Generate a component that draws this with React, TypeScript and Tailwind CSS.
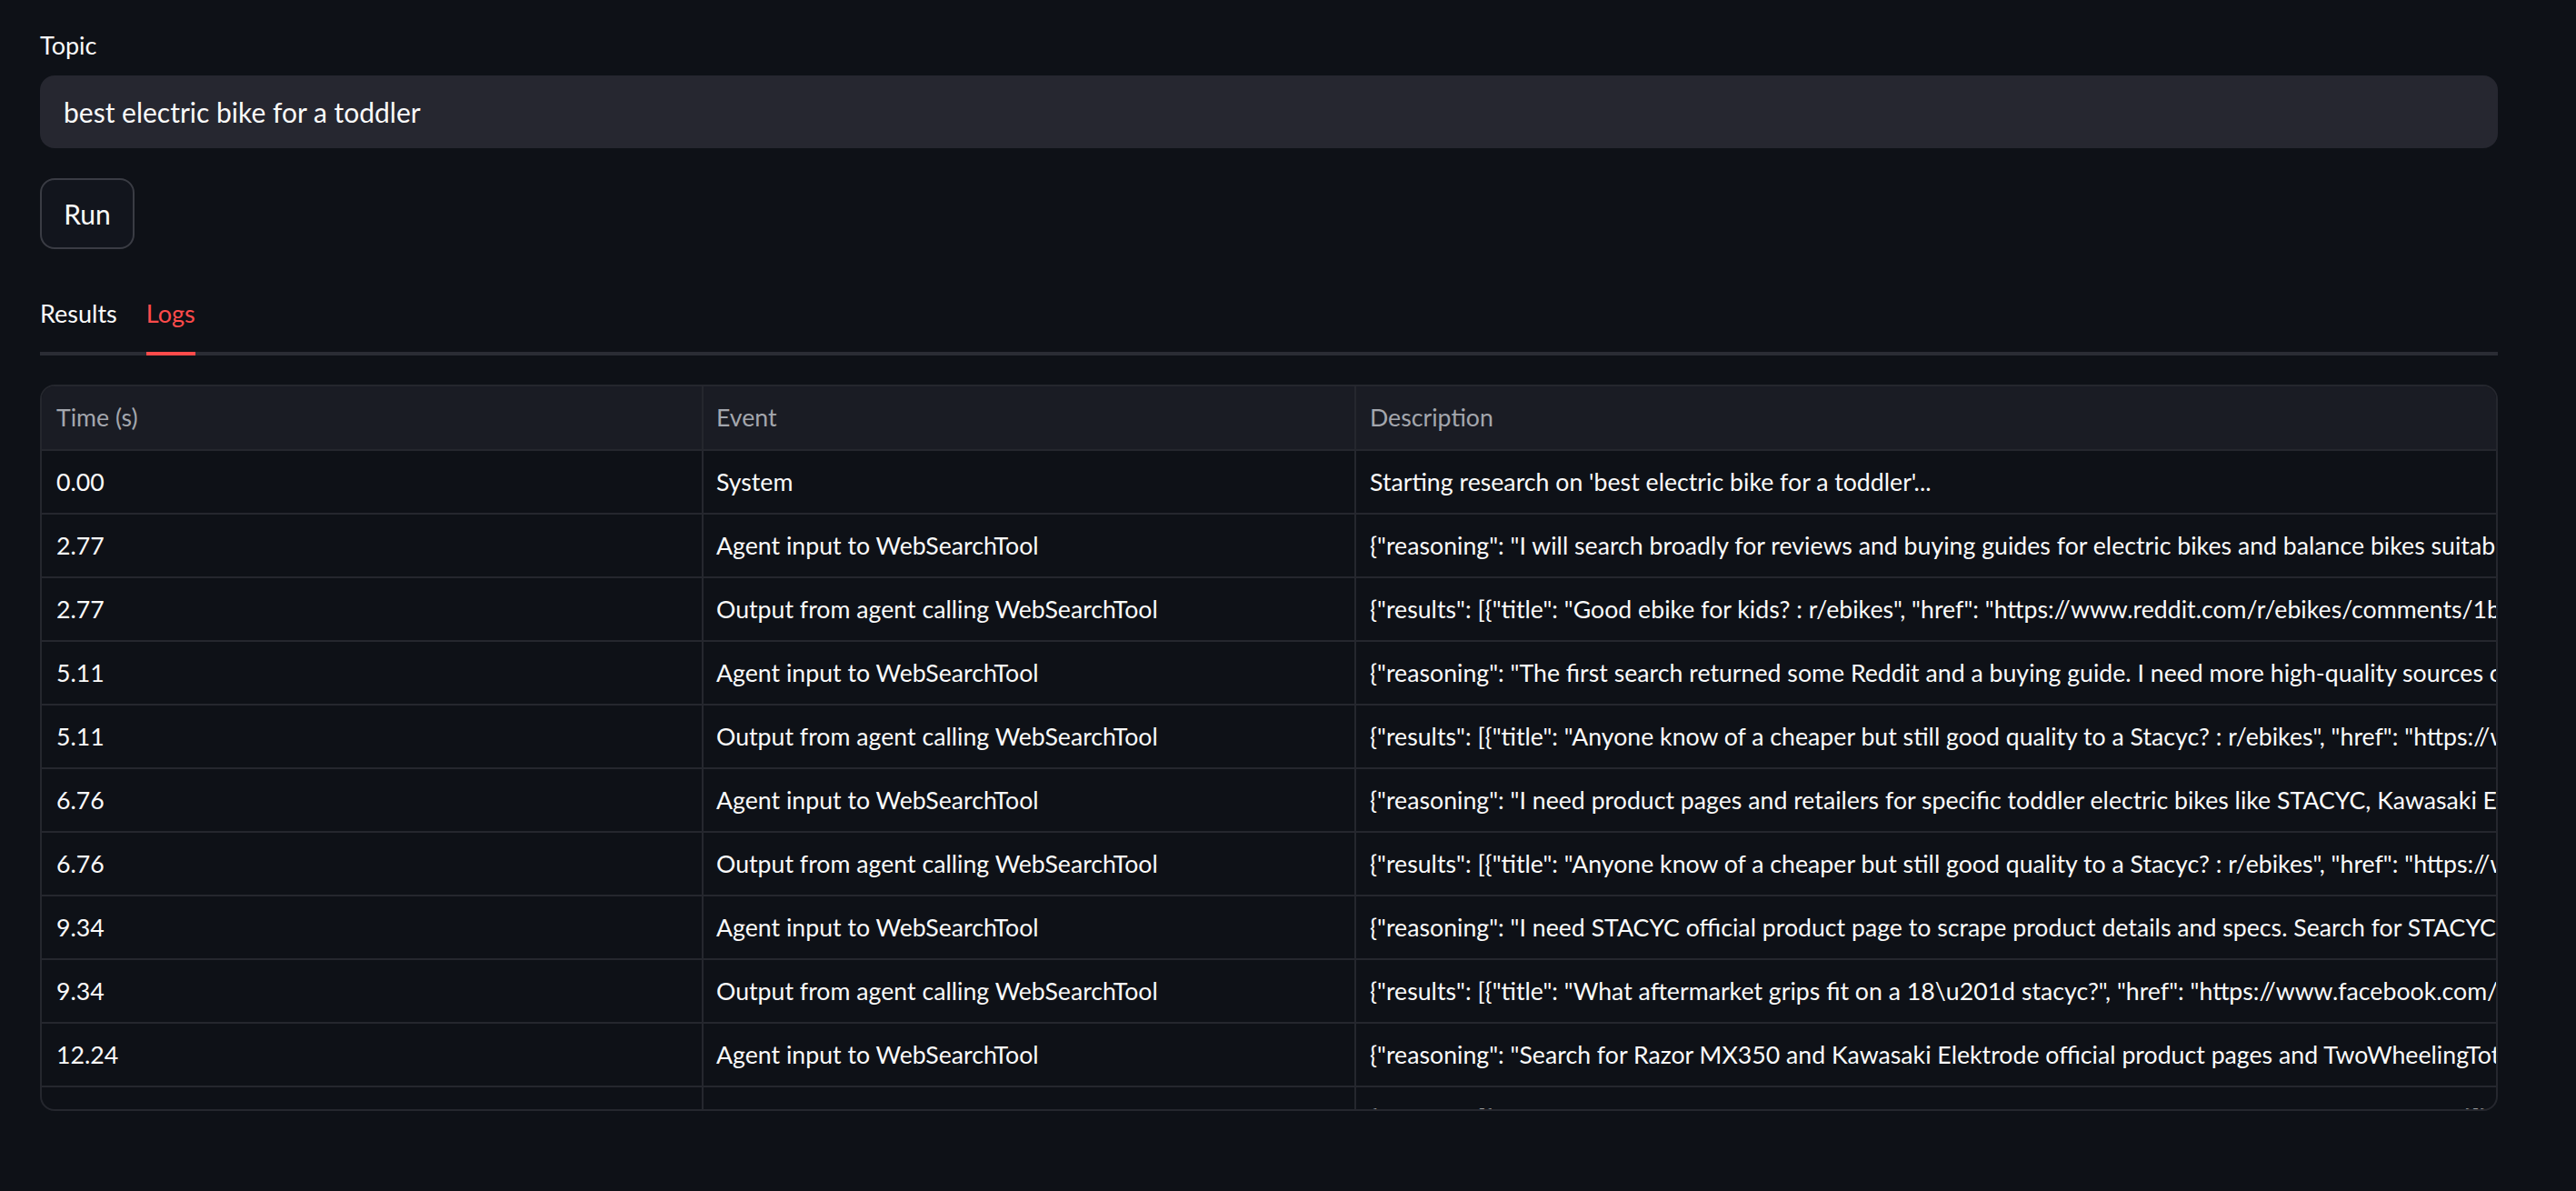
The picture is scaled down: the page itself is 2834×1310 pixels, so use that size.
const logs = [
  { t: '0.00', ev: 'System', desc: "Starting research on 'best electric bike for a toddler'..." },
  {
    t: '2.77',
    ev: 'Agent input to WebSearchTool',
    desc: '{"reasoning": "I will search broadly for reviews and buying guides for electric bikes and balance bikes suitable for toddlers and young children.", "search_term": "best electric balance bike for toddlers"}',
  },
  {
    t: '2.77',
    ev: 'Output from agent calling WebSearchTool',
    desc: '{"results": [{"title": "Good ebike for kids? : r/ebikes", "href": "https://www.reddit.com/r/ebikes/comments/1b2c3d/good_ebike_for_kids/", "body": "..."}]}',
  },
  {
    t: '5.11',
    ev: 'Agent input to WebSearchTool',
    desc: '{"reasoning": "The first search returned some Reddit and a buying guide. I need more high-quality sources on specific models and safety.", "search_term": "toddler electric balance bike review"}',
  },
  {
    t: '5.11',
    ev: 'Output from agent calling WebSearchTool',
    desc: '{"results": [{"title": "Anyone know of a cheaper but still good quality to a Stacyc? : r/ebikes", "href": "https://www.reddit.com/r/ebikes/comments/"}]}',
  },
  {
    t: '6.76',
    ev: 'Agent input to WebSearchTool',
    desc: '{"reasoning": "I need product pages and retailers for specific toddler electric bikes like STACYC, Kawasaki Elektrode and Razor.", "search_term": "STACYC 12eDRIVE"}',
  },
  {
    t: '6.76',
    ev: 'Output from agent calling WebSearchTool',
    desc: '{"results": [{"title": "Anyone know of a cheaper but still good quality to a Stacyc? : r/ebikes", "href": "https://www.reddit.com/r/ebikes/comments/"}]}',
  },
  {
    t: '9.34',
    ev: 'Agent input to WebSearchTool',
    desc: '{"reasoning": "I need STACYC official product page to scrape product details and specs. Search for STACYC official site.", "search_term": "stacyc.com 12eDRIVE"}',
  },
  {
    t: '9.34',
    ev: 'Output from agent calling WebSearchTool',
    desc: '{"results": [{"title": "What aftermarket grips fit on a 18\\u201d stacyc?", "href": "https://www.facebook.com/groups/stacyc/posts/"}]}',
  },
  {
    t: '12.24',
    ev: 'Agent input to WebSearchTool',
    desc: '{"reasoning": "Search for Razor MX350 and Kawasaki Elektrode official product pages and TwoWheelingTots reviews.", "search_term": "Razor MX350"}',
  },
  {
    t: '12.24',
    ev: 'Output from agent calling WebSearchTool',
    desc: '{"results": [{"title": "Razor MX350 Dirt Rocket Electric Motocross Bike", "href": "https://www.razor.com/"}]}',
  },
];

function Row({ t, ev, desc }: { t: string; ev: string; desc: string }) {
  return (
    <div className="flex h-[70px] shrink-0 border-b-2 border-[#25272e] text-[26.7px] text-[#fafafa]">
      <div className="flex w-[728px] shrink-0 items-center border-r-2 border-[#25272e] pl-[16px]">{t}</div>
      <div className="flex w-[718px] shrink-0 items-center border-r-2 border-[#25272e] pl-[14px]">{ev}</div>
      <div className="flex min-w-0 flex-1 items-center overflow-hidden whitespace-nowrap pl-[15px]">{desc}</div>
    </div>
  );
}

export default function App() {
  return (
    <div className="min-h-screen bg-[#0e1117] pt-[30px] pl-[44px] pr-[86px] [font-family:Lato,sans-serif] text-[#fafafa]">
      <label className="block h-[40px] text-[27px] leading-[40px]">Topic</label>
      <div className="mt-[13px] flex h-[80px] items-center rounded-[16px] bg-[#262730] pl-[26px] text-[30px]">
        best electric bike for a toddler
      </div>

      <button className="mt-[33px] flex h-[78px] w-[104px] items-center justify-center rounded-[16px] border-2 border-[#3a3c44] bg-[#12151d] text-[30px] text-[#fafafa]">
        Run
      </button>

      {/* Tabs */}
      <div className="mt-[51px] flex gap-[32px] border-b-4 border-[#2a2c34] text-[27px] leading-[40px]">
        <div className="-mb-[4px] pb-[22px]">Results</div>
        <div className="-mb-[4px] border-b-4 border-[#ff4b4b] pb-[22px] text-[#ff4b4b]">Logs</div>
      </div>

      {/* Logs table */}
      <div className="mt-[32px] flex h-[799px] flex-col overflow-hidden rounded-[16px] border-2 border-[#25272e]">
        <div className="flex h-[71px] shrink-0 border-b-2 border-[#25272e] bg-[#1a1c24] text-[26.7px] text-[#a3a6ad]">
          <div className="flex w-[728px] shrink-0 items-center border-r-2 border-[#25272e] pl-[16px]">Time (s)</div>
          <div className="flex w-[718px] shrink-0 items-center border-r-2 border-[#25272e] pl-[14px]">Event</div>
          <div className="flex flex-1 items-center pl-[15px]">Description</div>
        </div>
        {logs.map((r, i) => (
          <Row key={i} {...r} />
        ))}
      </div>
    </div>
  );
}
